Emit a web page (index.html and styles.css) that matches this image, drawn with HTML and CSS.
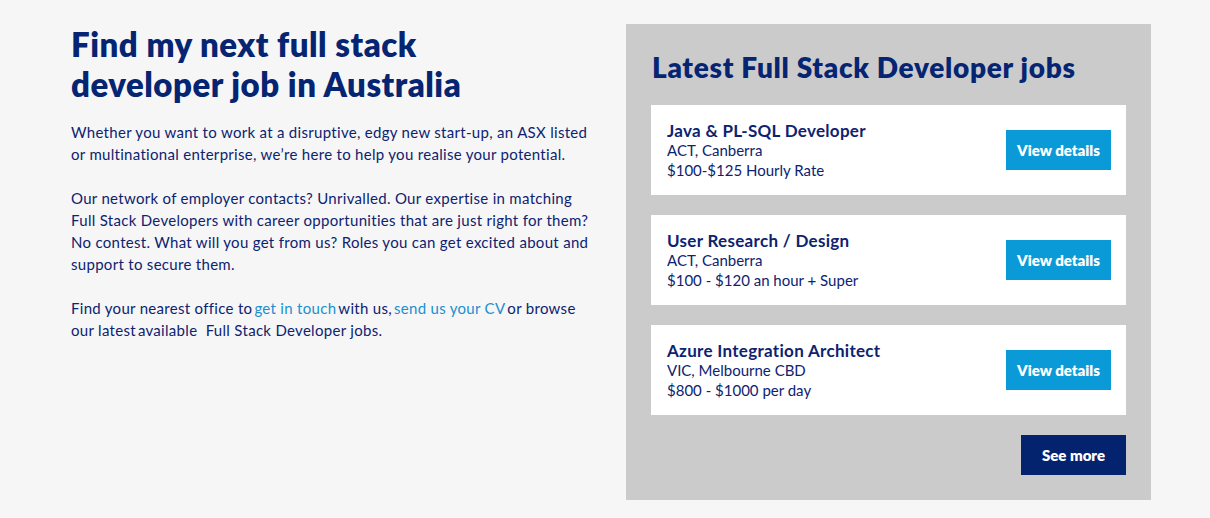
FILE: index.html
```html
<!DOCTYPE html>
<html lang="en">
<head>
<meta charset="utf-8">
<title>Full Stack Developer jobs</title>
<link rel="stylesheet" href="styles.css">
</head>
<body>
<main class="page">
  <section class="intro">
    <h1 class="intro-title">Find my next full stack<br>developer job in Australia</h1>
    <p class="intro-text">Whether you want to work at a disruptive, edgy new start-up, an ASX listed<br>or multinational enterprise, we’re here to help you realise your potential.</p>
    <p class="intro-text">Our network of employer contacts? Unrivalled. Our expertise in matching<br>Full Stack Developers with career opportunities that are just right for them?<br>No contest. What will you get from us? Roles you can get excited about and<br>support to secure them.</p>
    <p class="intro-text">Find your nearest office to<a class="link" href="#">get in touch</a>with us,<a class="link" href="#">send us your CV</a>or browse<br>our latest<span class="gap"></span>available &nbsp;Full Stack Developer jobs.</p>
  </section>
  <aside class="jobs">
    <h2 class="jobs-title">Latest Full Stack Developer jobs</h2>
    <div class="job-list">
      <article class="job">
        <div class="job-info">
          <h3 class="job-name">Java &amp; PL-SQL Developer</h3>
          <div class="job-meta">ACT, Canberra</div>
          <div class="job-meta">$100-$125 Hourly Rate</div>
        </div>
        <a class="btn-view" href="#">View details</a>
      </article>
      <article class="job">
        <div class="job-info">
          <h3 class="job-name">User Research / Design</h3>
          <div class="job-meta">ACT, Canberra</div>
          <div class="job-meta">$100 - $120 an hour + Super</div>
        </div>
        <a class="btn-view" href="#">View details</a>
      </article>
      <article class="job">
        <div class="job-info">
          <h3 class="job-name">Azure Integration Architect</h3>
          <div class="job-meta">VIC, Melbourne CBD</div>
          <div class="job-meta">$800 - $1000 per day</div>
        </div>
        <a class="btn-view" href="#">View details</a>
      </article>
    </div>
    <div class="jobs-footer">
      <a class="btn-more" href="#">See more</a>
    </div>
  </aside>
</main>
</body>
</html>
```
FILE: styles.css
```css
html, body {
  margin: 0;
  padding: 0;
}
body {
  background: #f6f6f6;
  font-family: Lato, "Liberation Sans", sans-serif;
  color: #0d2370;
  width: 1210px;
  height: 518px;
  overflow: hidden;
}
.page {
  display: flex;
  align-items: flex-start;
  padding: 24px 0 0 71px;
  gap: 30px;
}
.intro {
  width: 525px;
  flex: none;
}
.intro-title {
  margin: 0;
  font-size: 33px;
  line-height: 40px;
  font-weight: 800;
  color: #052572;
  letter-spacing: 0.5px;
}
.intro-text {
  margin: 22px 0 0;
  font-size: 15px;
  line-height: 22px;
  letter-spacing: 0.3px;
  white-space: nowrap;
}
.intro-title + .intro-text {
  margin-top: 17px;
}
.link {
  color: #1c8fcf;
  text-decoration: none;
  margin: 0 2px;
}
.gap {
  display: inline-block;
  width: 2px;
}
.jobs {
  width: 475px;
  flex: none;
  background: #cbcbcb;
  padding: 26px 25px 25px;
}
.jobs-title {
  margin: 0 0 0 1px;
  font-size: 28px;
  line-height: 34px;
  font-weight: 800;
  color: #052572;
  letter-spacing: 0.7px;
}
.job-list {
  display: flex;
  flex-direction: column;
  gap: 20px;
  margin-top: 21px;
}
.job {
  background: #fff;
  height: 90px;
  display: flex;
  align-items: center;
  justify-content: space-between;
  padding: 0 15px 0 16px;
}
.job-info {
  margin-top: 1px;
}
.job-name {
  margin: 0;
  font-size: 17px;
  line-height: 20px;
  font-weight: 700;
  letter-spacing: 0.3px;
}
.job-meta {
  font-size: 15px;
  line-height: 19.5px;
}
.btn-view, .btn-more {
  width: 105px;
  height: 40px;
  display: flex;
  align-items: center;
  justify-content: center;
  color: #fff;
  font-weight: 800;
  font-size: 15px;
  text-decoration: none;
}
.btn-view {
  background: #0a9ad8;
}
.btn-more {
  background: #04236f;
}
.jobs-footer {
  display: flex;
  justify-content: flex-end;
  margin-top: 20px;
}
```
